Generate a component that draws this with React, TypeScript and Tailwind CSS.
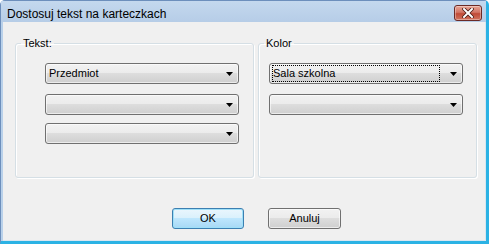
import React from 'react';

const font = { fontFamily: '"Liberation Sans", Arial, sans-serif' };

const Arrow: React.FC = () => (
  <svg width="7" height="4" viewBox="0 0 7 4" className="shrink-0">
    <path d="M0 0H7L3.5 4Z" fill="#000" />
  </svg>
);

const Combo: React.FC<{ value?: string; focused?: boolean; className?: string }> = ({ value, focused, className }) => (
  <div
    className={`w-[194px] h-[21px] rounded-[3px] border border-[#707070] flex items-center pl-[2px] pr-[5px] bg-[linear-gradient(#f2f2f2_0%,#ebebeb_50%,#dddddd_50%,#cfcfcf_100%)] shadow-[inset_0_0_0_1px_rgba(255,255,255,0.6)] ${className ?? ''}`}
  >
    <div
      className={`flex-1 h-[17px] flex items-center pl-[1px] text-[11px] text-black ${focused ? 'outline-1 outline-dotted outline-black -outline-offset-1 mr-[10px]' : 'mr-[12px]'}`}
    >
      {value}
    </div>
    <Arrow />
  </div>
);

const Group: React.FC<{ title: string; className?: string; inner?: string; children: React.ReactNode }> = ({ title, className, inner, children }) => (
  <fieldset className={`border border-[#d5dfe5] rounded-[3px] shadow-[inset_1px_1px_0_#fff,1px_1px_0_#fff] h-[141px] ${className ?? ''}`}>
    <legend className="ml-[5px] px-[2px] text-[11px] leading-[13px] text-black">{title}</legend>
    <div className={`flex flex-col pt-[13px] ${inner ?? ''}`}>{children}</div>
  </fieldset>
);

const App: React.FC = () => {
  return (
    <div
      className="w-[489px] h-[244px] flex flex-col bg-[#b9d1ea] border-l border-t border-[#6d8fbc] border-r-[3px] border-r-[#2bb2e4] border-b-[3px] border-b-[#2bb2e4] rounded-t-[5px]"
      style={font}
    >
      {/* title bar */}
      <div className="h-[21px] flex items-start justify-between pl-[6px] pr-[4px] bg-[linear-gradient(#c4d8ee,#b6cde7)]">
        <span className="text-[12px] leading-[12px] mt-[7px] text-black">Dostosuj tekst na karteczkach</span>
        <div className="mt-[4px] w-[28px] h-[16px] rounded-[3px] border border-[#6b2a26] bg-[linear-gradient(#e8a595_0%,#d27565_45%,#c04a36_55%,#d0745f_100%)] flex items-center justify-center shadow-[inset_0_0_0_1px_rgba(255,255,255,0.35)]">
          <svg width="12" height="10" viewBox="0 0 12 10">
            <path d="M2 1L10 9M10 1L2 9" stroke="#4a1a14" strokeWidth="3.6" strokeLinecap="square" />
            <path d="M2 1L10 9M10 1L2 9" stroke="#fff" strokeWidth="2" strokeLinecap="square" />
          </svg>
        </div>
      </div>

      {/* body */}
      <div className="flex-1 flex flex-col bg-[#f0f0f0] ml-[2px] border-r border-b border-[#d8e6f0]">
        <div className="flex gap-[4px] ml-[12px] mt-[15px]">
          <Group title="Tekst:" className="w-[239px]" inner="pl-[29px]">
            <Combo value="Przedmiot" />
            <Combo className="mt-[10px]" />
            <Combo className="mt-[8px]" />
          </Group>
          <Group title="Kolor" className="w-[219px]" inner="pl-[10px]">
            <Combo value="Sala szkolna" focused />
            <Combo className="mt-[10px]" />
          </Group>
        </div>

        <div className="flex gap-[24px] ml-[169px] mt-[30px]">
          <button className="w-[72px] h-[21px] rounded-[3px] border border-[#3c7fb1] bg-[linear-gradient(#eaf6fd_0%,#d9f0fc_50%,#bee6fd_50%,#a7d9f5_100%)] shadow-[inset_0_0_0_1px_#9fe0f8] text-[11px] text-black">
            OK
          </button>
          <button className="w-[73px] h-[21px] rounded-[3px] border border-[#707070] bg-[linear-gradient(#f2f2f2_0%,#ebebeb_50%,#dddddd_50%,#cfcfcf_100%)] shadow-[inset_0_0_0_1px_rgba(255,255,255,0.6)] text-[11px] text-black">
            Anuluj
          </button>
        </div>
      </div>
    </div>
  );
};

export default App;
